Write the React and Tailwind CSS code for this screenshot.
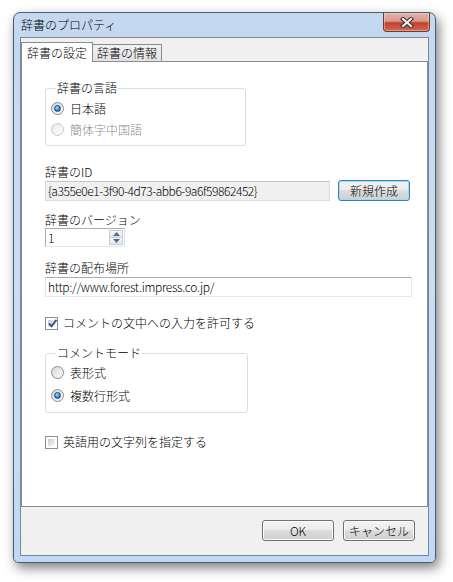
import React from "react";

function Radio({ checked, disabled }) {
  if (disabled) {
    return (
      <span className="flex h-[13px] w-[13px] shrink-0 rounded-full border border-[#c9c9c9] bg-gradient-to-br from-[#ececec] to-[#fbfbfb]" />
    );
  }
  return (
    <span className="flex h-[13px] w-[13px] shrink-0 items-center justify-center rounded-full border border-[#8a8c8e] bg-gradient-to-br from-[#d4d6d8] to-[#fbfbfb]">
      {checked && (
        <span className="h-[7px] w-[7px] rounded-full border border-[#1b4e80] bg-[radial-gradient(circle_at_40%_35%,#b4e8ff,#2f90d0_50%,#14497c)]" />
      )}
    </span>
  );
}

function Checkbox({ checked }) {
  return (
    <span className="flex h-[13px] w-[13px] shrink-0 border border-[#8f8f8f] bg-white p-[2px]">
      <span className="relative flex h-full w-full bg-gradient-to-br from-[#c9ccd2] to-[#f7f7f7]">
        {checked && (
          <svg className="absolute -left-[1px] -top-[2px]" width="11" height="11" viewBox="0 0 11 11">
            <path d="M2 5.5 L4.5 8.2 L9.5 1.8" fill="none" stroke="#3f5384" strokeWidth="1.9" />
          </svg>
        )}
      </span>
    </span>
  );
}

function GroupBox({ title, width, children, rowClass }) {
  return (
    <fieldset className={`${width} rounded-[3px] border border-[#d5dfe5] pb-[5px] pl-[5px]`}>
      <legend className="ml-[5px] px-[1px] leading-[14px]">{title}</legend>
      <div className={rowClass}>{children}</div>
    </fieldset>
  );
}

function WinButton({ children, isDefault }) {
  return (
    <button
      className={`flex h-[21px] w-[72px] items-center justify-center rounded-[3px] border bg-[linear-gradient(#f2f2f2,#ebebeb_50%,#dddddd_50%,#cfcfcf)] leading-none text-black ${
        isDefault ? "border-[#3c7fb1] shadow-[inset_0_0_0_1px_#9cdcf8]" : "border-[#707070] shadow-[inset_0_0_0_1px_#fcfcfc]"
      }`}
    >
      {children}
    </button>
  );
}

export default function App() {
  return (
    <div className="h-[582px] w-[453px] overflow-hidden bg-white pl-[13px] pt-[12px] font-['Noto_Sans_CJK_JP','Noto_Sans',sans-serif] text-[12px] font-light text-black">
      <div className="flex h-[551px] w-[423px] flex-col rounded-t-[7px] rounded-b-[5px] border border-[#4c5b6e] bg-gradient-to-b from-[#c4d9f1] via-[#c9def5] to-[#c0d9f6] shadow-[3px_5px_12px_rgba(0,0,0,0.5)]">
        <div className="flex h-[24px] shrink-0">
          <span className="ml-[7px] self-center leading-[14px]">辞書のプロパティ</span>
          <div className="ml-auto mr-[5px] flex h-[19px] w-[47px] items-center justify-center rounded-b-[4px] border border-t-0 border-[#6e3a33] bg-[linear-gradient(#e2b3aa,#d89a8e_45%,#c2402c_55%,#cf6a55)] shadow-[inset_0_0_0_1px_rgba(255,220,210,0.45)]">
            <svg width="14" height="11" viewBox="0 0 14 11">
              <path d="M3 2 L11 9 M11 2 L3 9" stroke="#3b2b2b" strokeWidth="4.2" strokeLinecap="square" />
              <path d="M3 2 L11 9 M11 2 L3 9" stroke="#f4f4f4" strokeWidth="2.2" strokeLinecap="square" />
            </svg>
          </div>
        </div>

        <div className="mx-[6px] mb-[6px] flex flex-1 flex-col border border-[#7b8794] bg-[#f0f0f0] pt-[4px]">
          <div className="flex h-[19px] items-end">
            <div className="relative z-10 -mb-px flex h-[20px] w-[72px] items-center justify-center border border-b-0 border-[#898c95] bg-white leading-[14px]">
              辞書の設定
            </div>
            <div className="-ml-px flex h-[17px] w-[70px] items-center justify-center border border-b-0 border-[#898c95] bg-gradient-to-b from-[#f2f2f2] to-[#e2e2e2] leading-[14px]">
              辞書の情報
            </div>
          </div>

          <div className="flex h-[446px] flex-col border border-[#898c95] bg-white pl-[23px]">
            <div className="mt-[19px]">
              <GroupBox title="辞書の言語" width="w-[201px]" rowClass="pt-[3px]">
                <div className="flex h-[21px] items-center gap-[6px]">
                  <Radio checked />
                  <span className="leading-[14px]">日本語</span>
                </div>
                <div className="flex h-[21px] items-center gap-[6px]">
                  <Radio disabled />
                  <span className="leading-[14px] text-[#8c8c8c]">簡体字中国語</span>
                </div>
              </GroupBox>
            </div>

            <div className="mt-[19px] leading-[14px]">辞書のID</div>
            <div className="mt-[1px] flex items-center gap-[8px]">
              <div className="flex h-[20px] w-[285px] items-center border border-[#dadde2] border-t-[#c4c7cc] bg-[#f0f0f0] pl-[2px] leading-none tracking-[-0.45px]">
                {"{a355e0e1-3f90-4d73-abb6-9a6f59862452}"}
              </div>
              <WinButton isDefault>新規作成</WinButton>
            </div>

            <div className="mt-[12px] leading-[14px]">辞書のバージョン</div>
            <div className="mt-[1px] flex h-[19px] w-[80px] items-center border border-[#abadb3] border-r-[#dbdfe6] border-b-[#e3e9ef] bg-white">
              <span className="flex-1 pl-[2px] leading-none">1</span>
              <div className="mr-[1px] flex h-[15px] w-[14px] flex-col">
                <div className="flex flex-1 items-center justify-center border border-[#c8cdd4] bg-gradient-to-b from-[#f7f7f7] to-[#e4e6ea]">
                  <svg width="7" height="4" viewBox="0 0 7 4">
                    <path d="M0 4 L3.5 0 L7 4 Z" fill="#4d6a9a" />
                  </svg>
                </div>
                <div className="flex flex-1 items-center justify-center border border-t-0 border-[#c8cdd4] bg-gradient-to-b from-[#f7f7f7] to-[#e4e6ea]">
                  <svg width="7" height="4" viewBox="0 0 7 4">
                    <path d="M0 0 L7 0 L3.5 4 Z" fill="#4d6a9a" />
                  </svg>
                </div>
              </div>
            </div>

            <div className="mt-[14px] leading-[14px]">辞書の配布場所</div>
            <div className="mt-[2px] flex h-[20px] w-[367px] items-center border border-[#e3e9ef] border-t-[#abadb3] bg-white pl-[2px] leading-none tracking-[-0.3px]">
              http://www.forest.impress.co.jp/
            </div>

            <div className="mt-[19px] flex h-[14px] items-center gap-[5px]">
              <Checkbox checked />
              <span className="leading-[14px]">コメントの文中への入力を許可する</span>
            </div>

            <div className="mt-[16px]">
              <GroupBox title="コメントモード" width="w-[203px]" rowClass="pt-[1px]">
                <div className="flex h-[23px] items-center gap-[6px]">
                  <Radio />
                  <span className="leading-[14px]">表形式</span>
                </div>
                <div className="flex h-[23px] items-center gap-[6px]">
                  <Radio checked />
                  <span className="leading-[14px]">複数行形式</span>
                </div>
              </GroupBox>
            </div>

            <div className="mt-[22px] flex h-[14px] items-center gap-[5px]">
              <Checkbox />
              <span className="leading-[14px]">英語用の文字列を指定する</span>
            </div>
          </div>

          <div className="mr-[13px] mt-[13px] flex justify-end gap-[9px]">
            <WinButton>OK</WinButton>
            <WinButton>キャンセル</WinButton>
          </div>
        </div>
      </div>
    </div>
  );
}
